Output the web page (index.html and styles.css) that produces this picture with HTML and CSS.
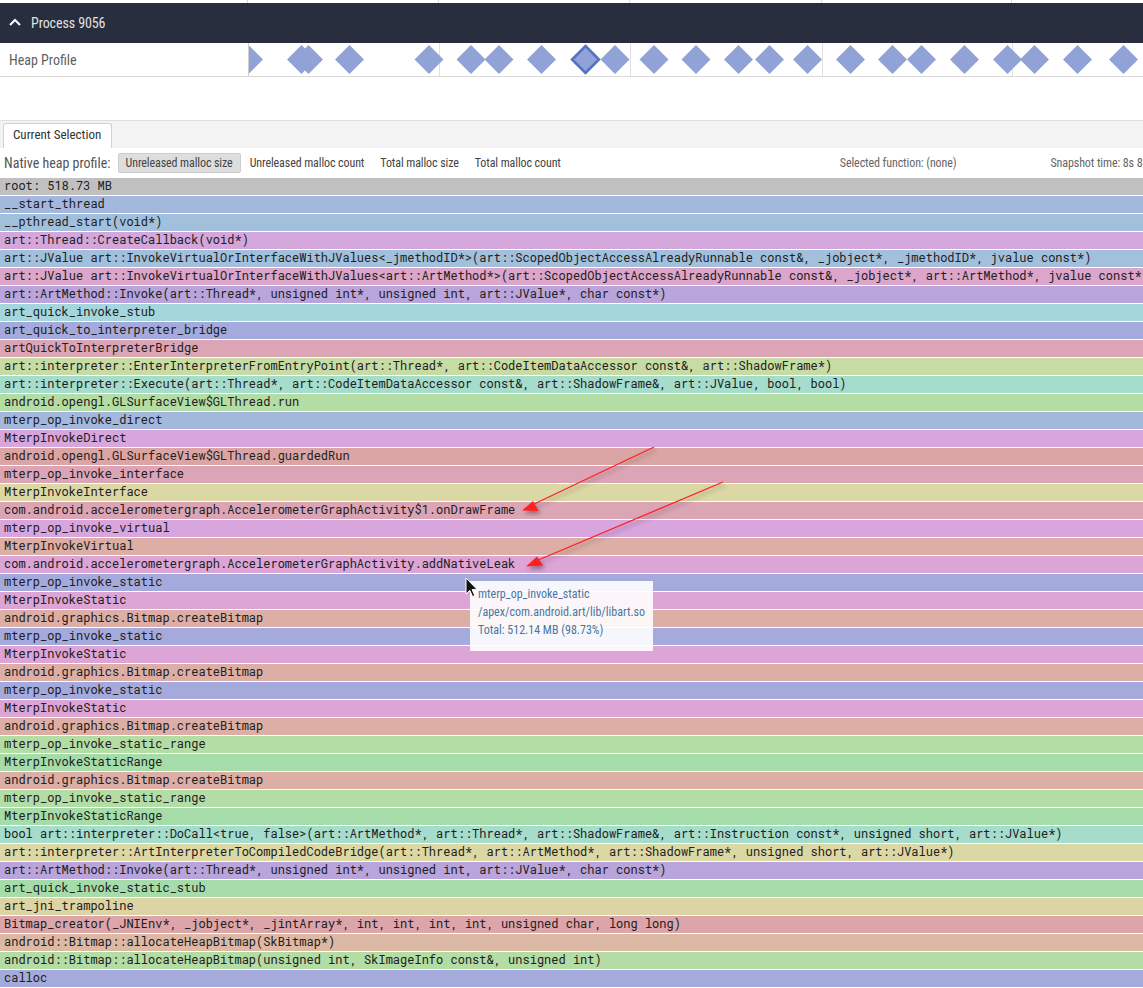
FILE: index.html
```html
<!DOCTYPE html>
<html>
<head>
<meta charset="utf-8">
<link rel="stylesheet" href="styles.css">
</head>
<body>
<div class="topstrip">
  <div class="strip-left"></div>
  <svg class="grid" width="894" height="3"><g stroke="#dcdcdc" stroke-width="1"><line x1="190.5" y1="0" x2="190.5" y2="3"/><line x1="381.5" y1="0" x2="381.5" y2="3"/><line x1="573.5" y1="0" x2="573.5" y2="3"/><line x1="763.5" y1="0" x2="763.5" y2="3"/></g></svg>
</div>
<div class="proc">
  <svg class="chev" width="12" height="8" viewBox="0 0 12 8"><path d="M1 7 L6 2 L11 7" fill="none" stroke="#fff" stroke-width="2"/></svg>
  <span class="proc-title">Process 9056</span>
</div>
<div class="track">
  <div class="track-label">Heap Profile</div>
  <div class="track-canvas">
    <svg width="894" height="33" viewBox="0 0 894 33">
      <g stroke="#e0e0e0" stroke-width="1"><line x1="190.5" y1="0" x2="190.5" y2="33"/><line x1="381.5" y1="0" x2="381.5" y2="33"/><line x1="573.5" y1="0" x2="573.5" y2="33"/><line x1="763.5" y1="0" x2="763.5" y2="33"/></g>
      <g fill="#91a3d6">
        <polygon points="-0.5,2 14,16.5 -0.5,31 -15,16.5"/>
        <polygon points="52.5,2 67,16.5 52.5,31 38,16.5"/>
        <polygon points="59.5,2 74,16.5 59.5,31 45,16.5"/>
        <polygon points="100.5,2 115,16.5 100.5,31 86,16.5"/>
        <polygon points="180,2 194.5,16.5 180,31 165.5,16.5"/>
        <polygon points="222,2 236.5,16.5 222,31 207.5,16.5"/>
        <polygon points="250,2 264.5,16.5 250,31 235.5,16.5"/>
        <polygon points="292.5,2 307,16.5 292.5,31 278,16.5"/>
        <polygon points="366,2 380.5,16.5 366,31 351.5,16.5"/>
        <polygon points="405,2 419.5,16.5 405,31 390.5,16.5"/>
        <polygon points="447,2 461.5,16.5 447,31 432.5,16.5"/>
        <polygon points="489.5,2 504,16.5 489.5,31 475,16.5"/>
        <polygon points="520.5,2 535,16.5 520.5,31 506,16.5"/>
        <polygon points="558.5,2 573,16.5 558.5,31 544,16.5"/>
        <polygon points="601.5,2 616,16.5 601.5,31 587,16.5"/>
        <polygon points="643.5,2 658,16.5 643.5,31 629,16.5"/>
        <polygon points="672.5,2 687,16.5 672.5,31 658,16.5"/>
        <polygon points="715.5,2 730,16.5 715.5,31 701,16.5"/>
        <polygon points="758.5,2 773,16.5 758.5,31 744,16.5"/>
        <polygon points="785.5,2 800,16.5 785.5,31 771,16.5"/>
        <polygon points="828.5,2 843,16.5 828.5,31 814,16.5"/>
        <polygon points="874.5,2 889,16.5 874.5,31 860,16.5"/>
        <polygon points="336.5,3 350,16.5 336.5,30 323,16.5" stroke="#5670c2" stroke-width="2.5"/>
      </g>
    </svg>
  </div>
</div>
<div class="spacer"></div>
<div class="tabbar">
  <div class="tab">Current Selection</div>
</div>
<div class="toolbar">
  <span class="tb-label">Native heap profile:</span>
  <span class="tb-btn active">Unreleased malloc size</span>
  <span class="tb-btn">Unreleased malloc count</span>
  <span class="tb-btn">Total malloc size</span>
  <span class="tb-btn">Total malloc count</span>
  <span class="tb-info sel">Selected function: (none)</span>
  <span class="tb-info snap">Snapshot time: 8s 823.9ms</span>
</div>
<div class="flame">
  <div class="row c-gray">root: 518.73 MB</div>
  <div class="row c-blue1">__start_thread</div>
  <div class="row c-blue2">__pthread_start(void*)</div>
  <div class="row c-mauve">art::Thread::CreateCallback(void*)</div>
  <div class="row c-blue2">art::JValue art::InvokeVirtualOrInterfaceWithJValues&lt;_jmethodID*&gt;(art::ScopedObjectAccessAlreadyRunnable const&amp;, _jobject*, _jmethodID*, jvalue const*)</div>
  <div class="row c-pink">art::JValue art::InvokeVirtualOrInterfaceWithJValues&lt;art::ArtMethod*&gt;(art::ScopedObjectAccessAlreadyRunnable const&amp;, _jobject*, art::ArtMethod*, jvalue const*)</div>
  <div class="row c-purple">art::ArtMethod::Invoke(art::Thread*, unsigned int*, unsigned int, art::JValue*, char const*)</div>
  <div class="row c-cyan">art_quick_invoke_stub</div>
  <div class="row c-peri">art_quick_to_interpreter_bridge</div>
  <div class="row c-rose">artQuickToInterpreterBridge</div>
  <div class="row c-lime">art::interpreter::EnterInterpreterFromEntryPoint(art::Thread*, art::CodeItemDataAccessor const&amp;, art::ShadowFrame*)</div>
  <div class="row c-teal">art::interpreter::Execute(art::Thread*, art::CodeItemDataAccessor const&amp;, art::ShadowFrame&amp;, art::JValue, bool, bool)</div>
  <div class="row c-green">android.opengl.GLSurfaceView$GLThread.run</div>
  <div class="row c-blue1">mterp_op_invoke_direct</div>
  <div class="row c-orchid">MterpInvokeDirect</div>
  <div class="row c-salmon">android.opengl.GLSurfaceView$GLThread.guardedRun</div>
  <div class="row c-rose">mterp_op_invoke_interface</div>
  <div class="row c-yellow">MterpInvokeInterface</div>
  <div class="row c-rose">com.android.accelerometergraph.AccelerometerGraphActivity$1.onDrawFrame</div>
  <div class="row c-orchid">mterp_op_invoke_virtual</div>
  <div class="row c-peach">MterpInvokeVirtual</div>
  <div class="row c-magenta">com.android.accelerometergraph.AccelerometerGraphActivity.addNativeLeak</div>
  <div class="row c-peri">mterp_op_invoke_static</div>
  <div class="row c-magenta">MterpInvokeStatic</div>
  <div class="row c-peach">android.graphics.Bitmap.createBitmap</div>
  <div class="row c-peri">mterp_op_invoke_static</div>
  <div class="row c-magenta">MterpInvokeStatic</div>
  <div class="row c-peach">android.graphics.Bitmap.createBitmap</div>
  <div class="row c-peri">mterp_op_invoke_static</div>
  <div class="row c-magenta">MterpInvokeStatic</div>
  <div class="row c-peach">android.graphics.Bitmap.createBitmap</div>
  <div class="row c-green">mterp_op_invoke_static_range</div>
  <div class="row c-mint">MterpInvokeStaticRange</div>
  <div class="row c-peach">android.graphics.Bitmap.createBitmap</div>
  <div class="row c-green">mterp_op_invoke_static_range</div>
  <div class="row c-mint">MterpInvokeStaticRange</div>
  <div class="row c-teal">bool art::interpreter::DoCall&lt;true, false&gt;(art::ArtMethod*, art::Thread*, art::ShadowFrame&amp;, art::Instruction const*, unsigned short, art::JValue*)</div>
  <div class="row c-yellow">art::interpreter::ArtInterpreterToCompiledCodeBridge(art::Thread*, art::ArtMethod*, art::ShadowFrame*, unsigned short, art::JValue*)</div>
  <div class="row c-purple">art::ArtMethod::Invoke(art::Thread*, unsigned int*, unsigned int, art::JValue*, char const*)</div>
  <div class="row c-mint">art_quick_invoke_static_stub</div>
  <div class="row c-beige">art_jni_trampoline</div>
  <div class="row c-red">Bitmap_creator(_JNIEnv*, _jobject*, _jintArray*, int, int, int, int, unsigned char, long long)</div>
  <div class="row c-apricot">android::Bitmap::allocateHeapBitmap(SkBitmap*)</div>
  <div class="row c-green">android::Bitmap::allocateHeapBitmap(unsigned int, SkImageInfo const&amp;, unsigned int)</div>
  <div class="row c-peri">calloc</div>
</div>

<div class="tooltip">
  <div>mterp_op_invoke_static</div>
  <div>/apex/com.android.art/lib/libart.so</div>
  <div>Total: 512.14 MB (98.73%)</div>
</div>

<svg class="cursor" width="14" height="22" viewBox="0 0 14 22"><path d="M1 1 L1 17 L4.8 13.4 L7.6 19.6 L9.8 18.6 L7.1 12.6 L12.2 12.6 Z" fill="#111" stroke="#fff" stroke-width="1"/></svg>

<svg class="arrows" width="1143" height="988" viewBox="0 0 1143 988">
  <g class="arrow-g">
    <line x1="654" y1="447" x2="532" y2="505" stroke="#ff1f1f" stroke-width="1.3"/>
    <polygon points="522,510.5 533,501 538.5,511" fill="#ff1f1f"/>
    <line x1="723" y1="482" x2="536" y2="561" stroke="#ff1f1f" stroke-width="1.3"/>
    <polygon points="526,566.5 537,556.5 543,565.5" fill="#ff1f1f"/>
  </g>
</svg>
</body>
</html>
```
FILE: styles.css
```css
* { box-sizing: border-box; }
html, body { margin: 0; padding: 0; }
body {
  width: 1143px;
  height: 988px;
  overflow: hidden;
  position: relative;
  background: #fff;
  font-family: "Roboto Condensed", Roboto, "Liberation Sans", sans-serif;
  font-stretch: condensed;
}
.topstrip { display: flex; height: 3px; background: #fff; }
.strip-left { width: 248px; border-right: 1px solid #d6d6d6; }
.grid { display: block; }

.proc {
  height: 40px;
  background: #282e3d;
  display: flex;
  align-items: center;
  padding-left: 9px;
  gap: 10px;
}
.chev { display: block; margin-top: -2px; }
.proc-title { color: #e2e2e2; font-size: 14px; letter-spacing: -0.1px; }

.track { display: flex; height: 34px; border-bottom: 1px solid #d9d9d9; }
.track-label {
  width: 249px;
  flex: none;
  border-right: 1px solid #cfcfcf;
  padding-left: 9px;
  display: flex;
  align-items: center;
  font-size: 14px;
  color: #5f5f5f;
}
.track-canvas { flex: 1; overflow: hidden; }
.track-canvas svg { display: block; }

.spacer { height: 43px; }

.tabbar {
  height: 28px;
  background: #f3f3f3;
  border-top: 1px solid #dedede;
  padding: 2px 0 0 3px;
  display: flex;
}
.tab {
  height: 25px;
  background: #fff;
  border: 1px solid #d2d2d2;
  border-bottom: none;
  border-radius: 3px 3px 0 0;
  padding: 0 10px 0 9px;
  font-size: 13px;
  line-height: 22px;
  color: #333;
}

.toolbar {
  height: 30px;
  display: flex;
  align-items: center;
  white-space: nowrap;
  overflow: hidden;
  font-size: 12px;
  letter-spacing: -0.1px;
  color: #444;
}
.tb-label { font-size: 14px; letter-spacing: 0; color: #555; padding-left: 4px; margin-right: 7px; }
.tb-btn {
  padding: 0 7px;
  height: 20px;
  line-height: 18px;
  border: 1px solid transparent;
  border-radius: 2px;
}
.tb-btn.active { background: #dedede; border-color: #cdcdcd; margin-right: 1px; }
.tb-info { color: #666; }
.sel { margin-left: 271px; }
.snap { margin-left: 94px; }

.flame { display: flex; flex-direction: column; }
.row {
  height: 17px;
  margin-bottom: 1px;
  padding-left: 4px;
  font-family: "Roboto Mono", "DejaVu Sans Mono", monospace;
  font-stretch: normal;
  font-size: 12px;
  line-height: 15px;
  color: #202020;
  white-space: pre;
  overflow: hidden;
}
.c-gray { background: #c0c0c0; }
.c-blue1 { background: #a3b8dc; }
.c-blue2 { background: #a2c0dc; }
.c-mauve { background: #d3a6dc; }
.c-pink { background: #dca5ca; }
.c-purple { background: #b9a5dc; }
.c-cyan { background: #a5d6dc; }
.c-peri { background: #a5aadc; }
.c-rose { background: #dca5b6; }
.c-lime { background: #c7dca5; }
.c-teal { background: #a5dccc; }
.c-green { background: #b4dca5; }
.c-orchid { background: #d8a5dc; }
.c-salmon { background: #dca5a5; }
.c-yellow { background: #dcd8a5; }
.c-peach { background: #dcaea5; }
.c-magenta { background: #dca5d5; }
.c-mint { background: #a5dcaa; }
.c-beige { background: #dcd4a5; }
.c-red { background: #dca5a9; }
.c-apricot { background: #dcb9a5; }

.tooltip {
  position: absolute;
  left: 470px;
  top: 581px;
  width: 183px;
  height: 70px;
  background: rgba(255, 255, 255, 0.9);
  padding: 4px 8px;
  font-size: 12px;
  line-height: 18px;
  color: #4876a0;
}
.cursor { position: absolute; left: 465px; top: 577px; }
.arrows { position: absolute; left: 0; top: 0; pointer-events: none; }
.arrow-g { filter: drop-shadow(2px 3px 2px rgba(0, 0, 0, 0.35)); }
```
